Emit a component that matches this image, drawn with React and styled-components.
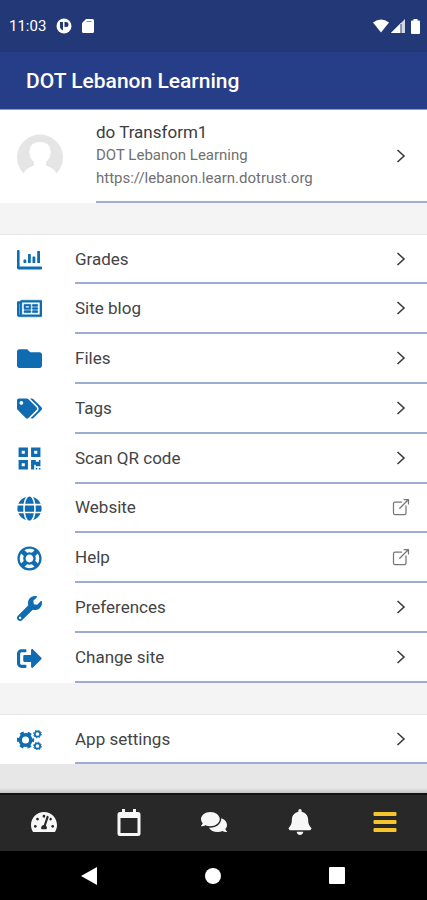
import React from "react";
import styled, { createGlobalStyle } from "styled-components";
import {
  FaBell,
  FaComments,
  FaFolder,
  FaGlobe,
  FaQrcode,
  FaRegLifeRing,
  FaRegNewspaper,
  FaSignOutAlt,
  FaTachometerAlt,
  FaTags,
  FaWrench,
} from "react-icons/fa";
import { IoOpenOutline } from "react-icons/io5";

const GlobalStyle = createGlobalStyle`
  * {
    box-sizing: border-box;
  }
  body {
    margin: 0;
    background: #f4f4f4;
    font-family: Roboto, "Liberation Sans", sans-serif;
    color: #444;
  }
`;

const Page = styled.div`
  display: flex;
  flex-direction: column;
  min-height: 100vh;
`;

const StatusBar = styled.div`
  display: flex;
  align-items: center;
  justify-content: space-between;
  height: 52px;
  padding: 0 6px 0 9px;
  background: #233877;
  color: #fff;
  font-size: 15px;
`;

const StatusGroup = styled.div`
  display: flex;
  align-items: center;
  gap: ${(props) => props.$gap};
  svg {
    display: block;
  }
`;

const TitleBar = styled.header`
  display: flex;
  align-items: center;
  height: 58px;
  padding: 0 26px;
  background: #263e88;
  border-bottom: 1px solid #8d9bc6;
  h1 {
    margin: 0;
    color: #fff;
    font-size: 21px;
    font-weight: 500;
  }
`;

const Main = styled.main`
  flex: 1;
  display: flex;
  flex-direction: column;
`;

const Profile = styled.a`
  display: flex;
  align-items: stretch;
  height: 93px;
  padding-left: 17px;
  background: #fff;
  color: inherit;
  text-decoration: none;
`;

const Avatar = styled.svg`
  flex: none;
  align-self: center;
  width: 46px;
  height: 46px;
  margin-right: 33px;
`;

const ProfileBody = styled.div`
  flex: 1;
  display: flex;
  align-items: center;
  justify-content: space-between;
  padding-right: 16px;
  border-bottom: 2px solid #a0b0d2;
`;

const ProfileText = styled.div`
  h2 {
    margin: 0;
    color: #3c3c3c;
    font-size: 17px;
    font-weight: 400;
    line-height: 23px;
  }
  p {
    margin: 0;
    color: #707070;
    font-size: 15px;
    line-height: 23px;
  }
`;

const List = styled.ul`
  flex: ${(props) => (props.$grow ? "1" : "none")};
  display: flex;
  flex-direction: column;
  margin: 32px 0 0;
  padding: 0;
  background: #fff;
  box-shadow: 0 -1px 1px #e8e8e8;
  list-style: none;
`;

const Item = styled.li`
  flex: 1;
  display: flex;
  min-height: 49px;
`;

const ItemLink = styled.a`
  flex: 1;
  display: flex;
  padding-left: 17px;
  color: inherit;
  font-size: 17px;
  text-decoration: none;
`;

const ItemIcon = styled.span`
  display: flex;
  align-items: center;
  justify-content: center;
  width: 25px;
  margin-right: 33px;
  color: #0f6cb0;
  font-size: 25px;
`;

const ItemBody = styled.span`
  flex: 1;
  display: flex;
  align-items: center;
  justify-content: space-between;
  padding-right: 16px;
  border-bottom: 2px solid #9dadd1;
  svg {
    color: #777;
  }
`;

const Spacer = styled.div`
  height: 29px;
  background: linear-gradient(#e7e7e7 24px, #c4c4c4);
`;

const TabBar = styled.nav`
  display: grid;
  grid-template-columns: repeat(5, 1fr);
  height: 58px;
  padding-bottom: 2px;
  background: #282828;
  border-top: 2px solid #121212;
`;

const Tab = styled.button`
  display: flex;
  align-items: center;
  justify-content: center;
  padding: 0 0 0 2px;
  border: 0;
  background: none;
  color: ${(props) => (props.$active ? "#f6c52c" : "#f7f7f7")};
  font-size: 26px;
`;

const SystemBar = styled.nav`
  display: flex;
  align-items: center;
  justify-content: space-between;
  height: 49px;
  padding: 0 73px;
  background: #000;
`;

const SystemButton = styled.button`
  display: flex;
  padding: 4px 8px;
  border: 0;
  background: none;
`;

const Chevron = () => (
  <svg width="20" height="20" viewBox="0 0 20 20" fill="none">
    <path d="M6.500 4l6.500 6-6.500 6" stroke="#3c3c3c" strokeWidth="1.600" />
  </svg>
);

const ChartIcon = () => (
  <svg width="25" height="20" viewBox="0 0 25 20" fill="currentColor">
    <path d="M0 1q0-1 1-1h.600q1 0 1 1v15.500H24q1 0 1 1v.900q0 1-1 1H1.500Q0 19.400 0 18z" />
    <rect x="6.500" y="9.500" width="2.800" height="3.500" rx=".6" />
    <rect x="11" y="4" width="2.800" height="9" rx=".6" />
    <rect x="15.500" y="6.500" width="2.800" height="6.500" rx=".6" />
    <rect x="20.200" y="1" width="2.800" height="12" rx=".6" />
  </svg>
);

const GearsIcon = () => (
  <svg width="25" height="20" viewBox="0 0 25 20" fill="none" stroke="currentColor">
    <circle cx="8.500" cy="10" r="5.200" strokeWidth="3.400" />
    <circle cx="8.500" cy="10" r="7.500" strokeWidth="2.400" strokeDasharray="3.927 3.927" strokeDashoffset="1.960" />
    <circle cx="20.500" cy="4" r="2.700" strokeWidth="1.700" />
    <circle cx="20.500" cy="4" r="3.900" strokeWidth="1" strokeDasharray="1.530 1.530" />
    <circle cx="20.500" cy="16" r="2.700" strokeWidth="1.700" />
    <circle cx="20.500" cy="16" r="3.900" strokeWidth="1" strokeDasharray="1.530 1.530" />
  </svg>
);

const CalendarIcon = () => (
  <svg width="24" height="27" viewBox="0 0 24 27" fill="currentColor">
    <path
      fillRule="evenodd"
      d="M5 0h3v3h8V0h3v3h2a2.500 2.500 0 0 1 2.500 2.500v19A2.500 2.500 0 0 1 21 27H3a2.500 2.500 0 0 1-2.500-2.500v-19A2.500 2.500 0 0 1 3 3h2zM3.500 9v15h17V9z"
    />
  </svg>
);

const MenuIcon = () => (
  <svg width="24" height="22" viewBox="0 0 24 22" fill="currentColor">
    <rect x="0.500" y="1" width="23" height="4" rx="1" />
    <rect x="0.500" y="9" width="23" height="4" rx="1" />
    <rect x="0.500" y="17" width="23" height="4" rx="1" />
  </svg>
);

const items = [
  { label: "Grades", icon: <ChartIcon /> },
  { label: "Site blog", icon: <FaRegNewspaper stroke="currentColor" strokeWidth="10" /> },
  { label: "Files", icon: <FaFolder /> },
  { label: "Tags", icon: <FaTags /> },
  { label: "Scan QR code", icon: <FaQrcode /> },
  { label: "Website", icon: <FaGlobe />, external: true },
  { label: "Help", icon: <FaRegLifeRing />, external: true },
  { label: "Preferences", icon: <FaWrench /> },
  { label: "Change site", icon: <FaSignOutAlt /> },
];

const MenuItem = ({ label, icon, external }) => (
  <Item>
    <ItemLink href="#">
      <ItemIcon>{icon}</ItemIcon>
      <ItemBody>
        {label}
        {external ? <IoOpenOutline size={20} /> : <Chevron />}
      </ItemBody>
    </ItemLink>
  </Item>
);

const App = () => {
  return (
    <Page>
      <GlobalStyle />
      <StatusBar>
        <StatusGroup $gap="10px">
          <span>11:03</span>
          <svg width="16" height="16" viewBox="0 0 16 16">
            <circle cx="8" cy="8" r="7.500" fill="#fff" />
            <path d="M4 4h3v8.500a5 5 0 0 1-3-3zM8.500 4H10a2.500 2.500 0 0 1 0 5H8.500z" fill="#233877" />
          </svg>
          <svg width="12" height="14" viewBox="0 0 12 14">
            <path d="M4 0h6.500A1.500 1.500 0 0 1 12 1.500v11a1.500 1.500 0 0 1-1.500 1.500h-9A1.500 1.500 0 0 1 0 12.500V4z" fill="#fff" />
            <path d="M4.500 2.500h5" stroke="#8490b5" strokeWidth="1" />
          </svg>
        </StatusGroup>
        <StatusGroup $gap="2px">
          <svg width="16" height="14" viewBox="0 0 16 14">
            <path d="M0 3.500Q8-2.500 16 3.500L8 13.500z" fill="#fff" />
          </svg>
          <svg width="14" height="14" viewBox="0 0 14 14">
            <path d="M14 0v14H0z" fill="#d3d7e4" />
            <path d="M10 4v10H0z" fill="#fff" />
            <path d="M10 5v9" stroke="#67749f" strokeWidth="1.500" />
          </svg>
          <svg width="14" height="15" viewBox="0 0 14 15">
            <path d="M6.500 0h4v1.500H12q1 0 1 1V14q0 1-1 1H5q-1 0-1-1V2.500q0-1 1-1h1.500z" fill="#fff" />
          </svg>
        </StatusGroup>
      </StatusBar>
      <TitleBar>
        <h1>DOT Lebanon Learning</h1>
      </TitleBar>
      <Main>
        <Profile href="#">
          <Avatar viewBox="0 0 46 46">
            <path
              d="M6.500 39.500A23 23 0 1 1 39.500 39.500Q37 34 29 31.500V28Q34 24 33.500 17Q33 8 23 8T12.500 17Q12 24 17 28v3.500Q9 34 6.500 39.500z"
              fill="#e5e5e5"
            />
          </Avatar>
          <ProfileBody>
            <ProfileText>
              <h2>do Transform1</h2>
              <p>DOT Lebanon Learning</p>
              <p>https://lebanon.learn.dotrust.org</p>
            </ProfileText>
            <Chevron />
          </ProfileBody>
        </Profile>
        <List $grow>
          {items.map((item) => (
            <MenuItem key={item.label} {...item} />
          ))}
        </List>
        <List>
          <MenuItem label="App settings" icon={<GearsIcon />} />
        </List>
        <Spacer />
      </Main>
      <TabBar>
        <Tab aria-label="Dashboard">
          <FaTachometerAlt />
        </Tab>
        <Tab aria-label="Calendar">
          <CalendarIcon />
        </Tab>
        <Tab aria-label="Messages">
          <FaComments />
        </Tab>
        <Tab aria-label="Notifications">
          <FaBell />
        </Tab>
        <Tab aria-label="More" $active>
          <MenuIcon />
        </Tab>
      </TabBar>
      <SystemBar>
        <SystemButton aria-label="Back">
          <svg width="16" height="18" viewBox="0 0 16 18">
            <path d="M16 0v18L0 9z" fill="#fff" />
          </svg>
        </SystemButton>
        <SystemButton aria-label="Home">
          <svg width="16" height="16" viewBox="0 0 16 16">
            <circle cx="8" cy="8" r="8" fill="#fff" />
          </svg>
        </SystemButton>
        <SystemButton aria-label="Recent apps">
          <svg width="17" height="17" viewBox="0 0 17 17">
            <rect width="16" height="17" rx="1" fill="#fff" />
          </svg>
        </SystemButton>
      </SystemBar>
    </Page>
  );
};

export default App;
